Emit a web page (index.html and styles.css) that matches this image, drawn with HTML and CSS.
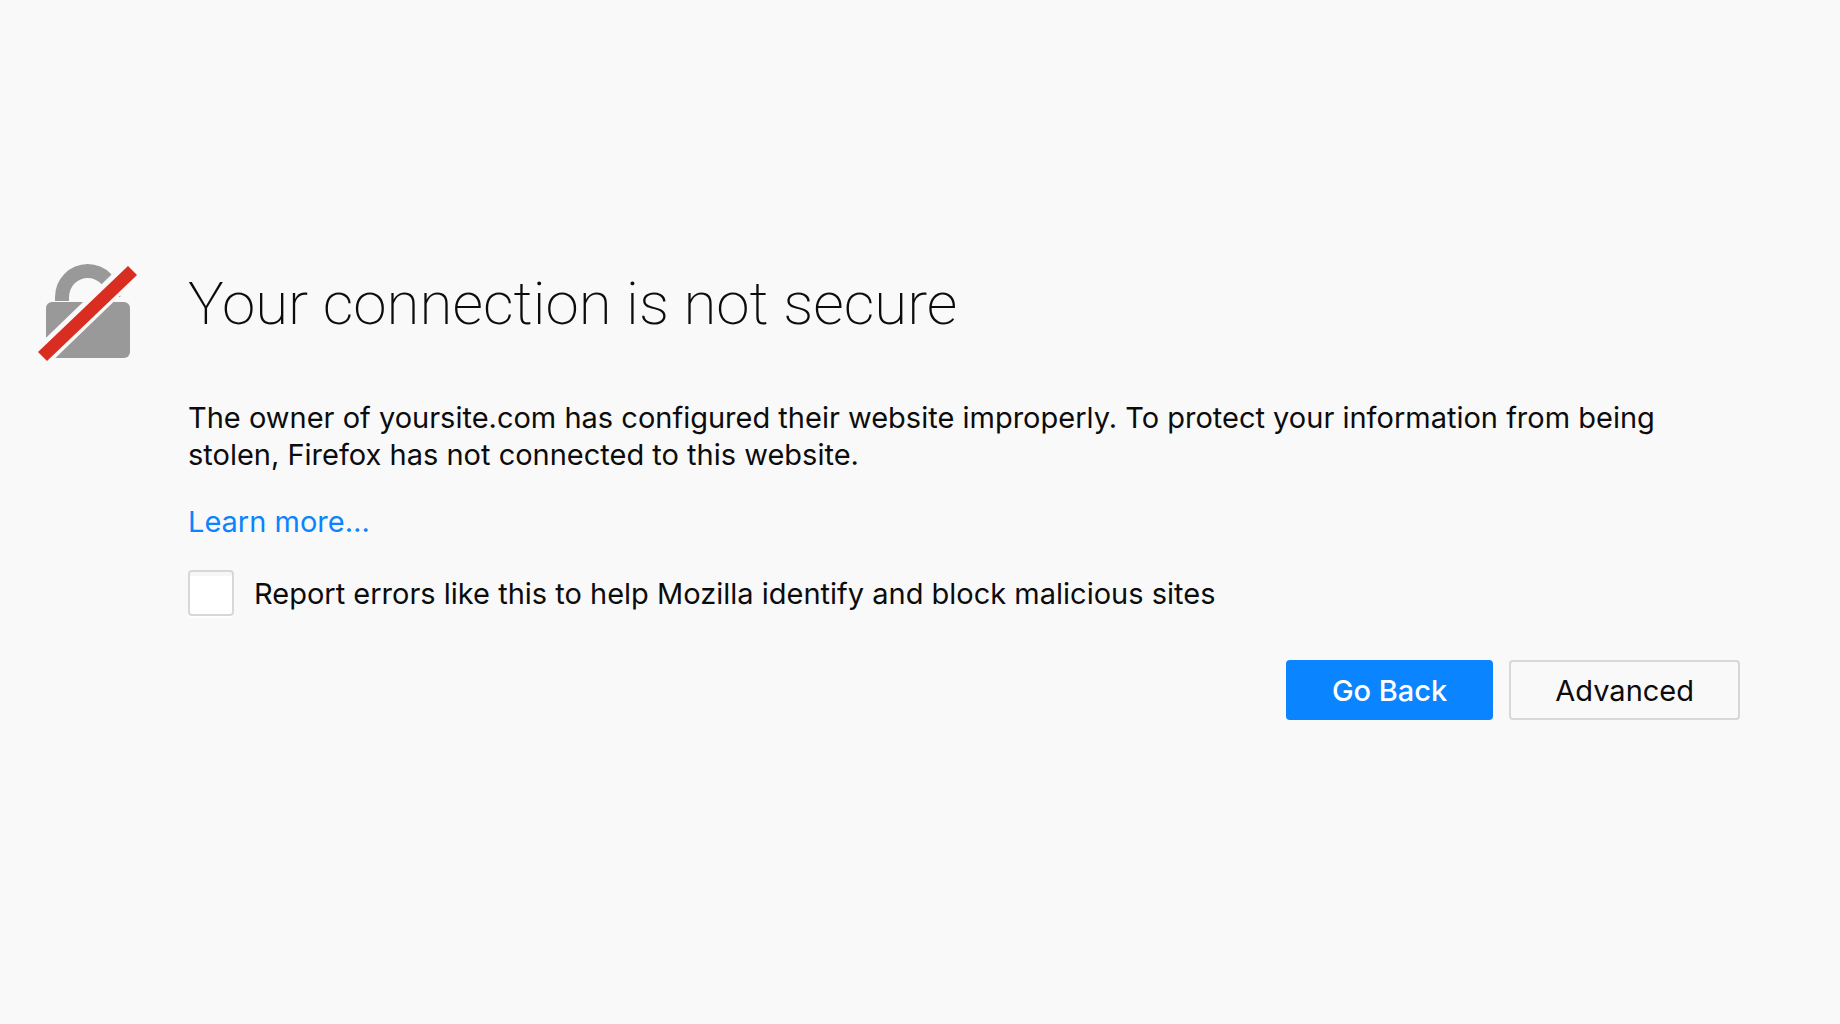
FILE: index.html
```
<!DOCTYPE html>
<html lang="en">
<head>
    <meta charset="UTF-8">
    <meta name="viewport" content="width=device-width, initial-scale=1.0">
    <title>Insecure Connection</title>
    <link rel="stylesheet" href="styles.css">
</head>
<body>
    <main class="error-page">
        <svg class="lock-icon" viewBox="0 0 100 98" aria-hidden="true">
            <path class="lock" d="M17 37V33A32.7 33 0 0 1 82.4 33H68.4A18.7 19 0 0 0 31 33V37Z"/>
            <rect class="lock" x="8" y="38" width="84" height="56" rx="6"/>
            <path class="slash-gap" d="M110 -10L-6 102"/>
            <path class="slash" d="M90 2L99 11L9 97L0 88Z"/>
        </svg>
        <div class="content">
            <h1>Your connection is not secure</h1>
            <p>The owner of yoursite.com has configured their website improperly. To protect your information from being stolen, Firefox has not connected to this website.</p>
            <a href="#" class="learn-more">Learn more…</a>
            <div class="report">
                <input type="checkbox" id="reportErrors">
                <label for="reportErrors">Report errors like this to help Mozilla identify and block malicious sites</label>
            </div>
            <div class="buttons">
                <button type="button" class="primary">Go Back</button>
                <button type="button">Advanced</button>
            </div>
        </div>
    </main>
</body>
</html>
```
FILE: styles.css
```
*{
    box-sizing: border-box;
}

body{
    margin: 0;
    min-height: 100vh;
    display: flex;
    align-items: center;
    background-color: #f9f9f9;
    color: #0c0c0d;
    font-family: Inter, "Liberation Sans", sans-serif;
    font-size: 29px;
    line-height: 37px;
}

.error-page{
    flex: 1;
    display: grid;
    grid-template-columns: 100px 1fr;
    column-gap: 50px;
    align-items: start;
    padding: 0 100px 40px 38px;
}

.lock-icon{
    width: 100px;
}

.lock{
    fill: #999;
}

.slash-gap{
    stroke: #f9f9f9;
    stroke-width: 21;
}

.slash{
    fill: #d92d21;
}

h1{
    margin: 0 0 55px;
    font-family: Roboto, Inter, sans-serif;
    font-size: 60px;
    font-weight: 200;
    line-height: 80px;
}

p{
    margin: 0 0 30px;
}

.learn-more{
    color: #0a84ff;
    text-decoration: none;
}

.report{
    display: flex;
    align-items: center;
    gap: 20px;
    margin-top: 30px;
}

.report input{
    appearance: none;
    flex: none;
    width: 46px;
    height: 46px;
    margin: 0;
    border: 2px solid #d7d7db;
    border-radius: 4px;
    background-color: #fff;
    box-shadow: inset 0 4px 0 #f7f7f8, 0 2px 2px #fff;
}

.report input:checked{
    background-color: #0a84ff;
}

.buttons{
    display: flex;
    justify-content: flex-end;
    gap: 16px;
    margin-top: 44px;
}

button{
    height: 60px;
    padding: 0 44px;
    border: 2px solid #d7d7db;
    border-radius: 4px;
    background-color: #f9f9f9;
    color: #0c0c0d;
    font: inherit;
}

.primary{
    border-color: #0a84ff;
    background-color: #0a84ff;
    color: #fff;
    font-weight: 500;
}
```
